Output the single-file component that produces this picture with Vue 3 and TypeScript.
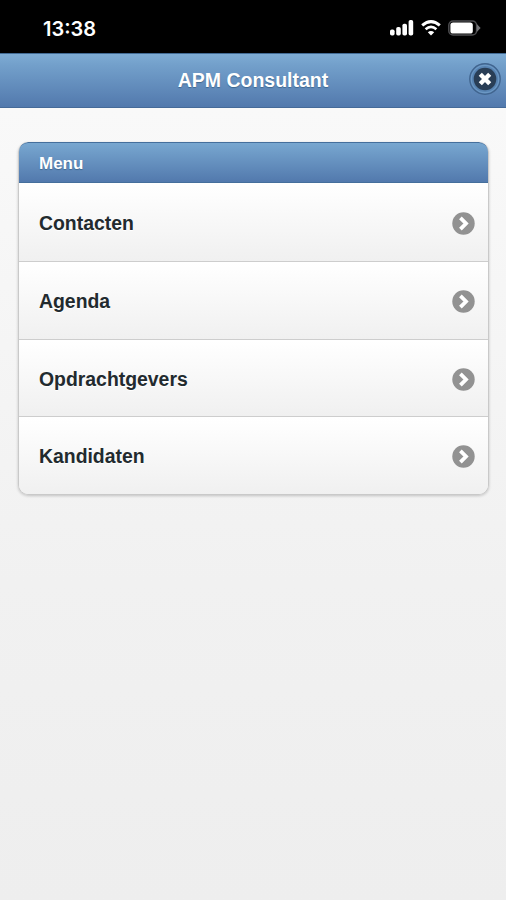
<script setup lang="ts">
const items: string[] = ['Contacten', 'Agenda', 'Opdrachtgevers', 'Kandidaten']
</script>

<template>
  <div class="screen">
    <div class="status">
      <span class="time">13:38</span>
      <div class="indicators">
        <svg class="signal" width="24" height="16" viewBox="0 0 24 16" fill="#fff">
          <rect x="0" y="9.5" width="4.6" height="6" rx="1.8" />
          <rect x="6.2" y="7" width="4.6" height="8.5" rx="1.8" />
          <rect x="12.4" y="3.8" width="4.6" height="11.7" rx="1.8" />
          <rect x="18.6" y="0" width="4.6" height="15.5" rx="1.8" />
        </svg>
        <svg class="wifi" width="20" height="16" viewBox="0 0 20 16" fill="none" stroke="#fff">
          <path d="M1.2 5.4 Q10 -2.2 18.8 5.4" stroke-width="3" />
          <path d="M4.6 9.2 Q10 4.5 15.4 9.2" stroke-width="2.7" />
          <path d="M10 15.5 L6.8 12.3 Q10 9.8 13.2 12.3 Z" fill="#fff" stroke="none" />
        </svg>
        <svg class="battery" width="33" height="16" viewBox="0 0 33 16">
          <rect x="0.8" y="0.9" width="27.8" height="14.2" rx="4.3" fill="none" stroke="#4c4c4f" stroke-width="1.5" />
          <rect x="2.4" y="2.4" width="22.4" height="11.2" rx="2.7" fill="#fff" />
          <path d="M28.8 4 L32.6 8 L28.8 12 Z" fill="#747477" />
        </svg>
      </div>
    </div>
    <header class="bar">
      <h1>APM Consultant</h1>
      <button class="close" aria-label="Close">
        <svg width="32" height="32" viewBox="0 0 32 32">
          <circle cx="16" cy="16" r="15.2" fill="#5783b2" stroke="#41658f" stroke-width="1.4" />
          <circle cx="16" cy="16" r="13.7" fill="none" stroke="#6c98c4" stroke-width="1.2" />
          <circle cx="16" cy="16" r="11.3" fill="#293e56" />
          <path d="M11.3 11.3 L20.7 20.7 M20.7 11.3 L11.3 20.7" stroke="#fff" stroke-width="4.4" />
        </svg>
      </button>
    </header>
    <main>
      <ul class="list">
        <li class="divider">Menu</li>
        <li v-for="item in items" :key="item" class="row">
          <span>{{ item }}</span>
          <svg width="23" height="23" viewBox="0 0 23 23">
            <circle cx="11.5" cy="11.5" r="11.2" fill="#929292" />
            <path d="M8.4 5.9 L14 11.5 L8.4 17.1" fill="none" stroke="#fff" stroke-width="3.8" />
          </svg>
        </li>
      </ul>
    </main>
  </div>
</template>

<style>
body {
  margin: 0;
}
</style>

<style scoped>
.screen {
  display: flex;
  flex-direction: column;
  height: 900px;
  font-family: "Liberation Sans", Arial, sans-serif;
  background: #eee;
}
.status {
  box-sizing: border-box;
  flex: none;
  display: flex;
  justify-content: space-between;
  height: 53px;
  padding: 0 25px 0 43px;
  background: #000;
  color: #fff;
}
.time {
  padding-top: 16px;
  font: 600 20px/26px Inter, sans-serif;
}
.indicators {
  display: flex;
  gap: 7px;
  padding-top: 20px;
}
.bar {
  box-sizing: border-box;
  flex: none;
  display: flex;
  align-items: center;
  height: 55px;
  padding: 0 5px 4px 37px;
  border-top: 1px solid #426b95;
  border-bottom: 1px solid #456a98;
  background: linear-gradient(#7eacd4, #73a0cb 20%, #5279ad);
}
h1 {
  flex: 1;
  margin: 0;
  padding-top: 3px;
  text-align: center;
  font-size: 19.5px;
  line-height: 24px;
  color: #fff;
  text-shadow: 0 1px 1px #3e6790;
}
.close {
  flex: none;
  display: flex;
  padding: 0;
  border: 0;
  background: none;
}
main {
  flex: 1;
  padding: 34px 17px 0 18px;
  background: linear-gradient(#f9f9f9, #f1f1f1 60%, #eee);
}
.list {
  box-sizing: border-box;
  height: 353px;
  margin: 0;
  padding: 0;
  display: flex;
  flex-direction: column;
  overflow: hidden;
  list-style: none;
  border: 1px solid #c9c9c9;
  border-top: 0;
  border-radius: 10px;
  box-shadow: 0 1px 3px rgba(0, 0, 0, 0.2);
}
.divider {
  box-sizing: border-box;
  flex: none;
  height: 41px;
  margin: 0 -1px;
  padding: 0 20px;
  border: 1px solid #456f9c;
  border-radius: 10px 10px 0 0;
  background: linear-gradient(#78a7d0, #5279ad);
  color: #fff;
  font-size: 17px;
  font-weight: bold;
  line-height: 41px;
  text-shadow: 0 1px 1px #3e6790;
}
.row {
  box-sizing: border-box;
  flex: 1;
  display: flex;
  align-items: center;
  justify-content: space-between;
  padding: 1px 13px 0 20px;
  border-top: 1px solid #fff;
  border-bottom: 1px solid #cdcdcd;
  background: linear-gradient(#fff, #f0f0f0);
  color: #222a2e;
  font-size: 19.4px;
  font-weight: bold;
  text-shadow: 0 1px 0 #fff;
}
.row:nth-child(2) {
  flex: none;
  height: 79px;
}
.row:last-child {
  border-bottom: 0;
}
</style>
